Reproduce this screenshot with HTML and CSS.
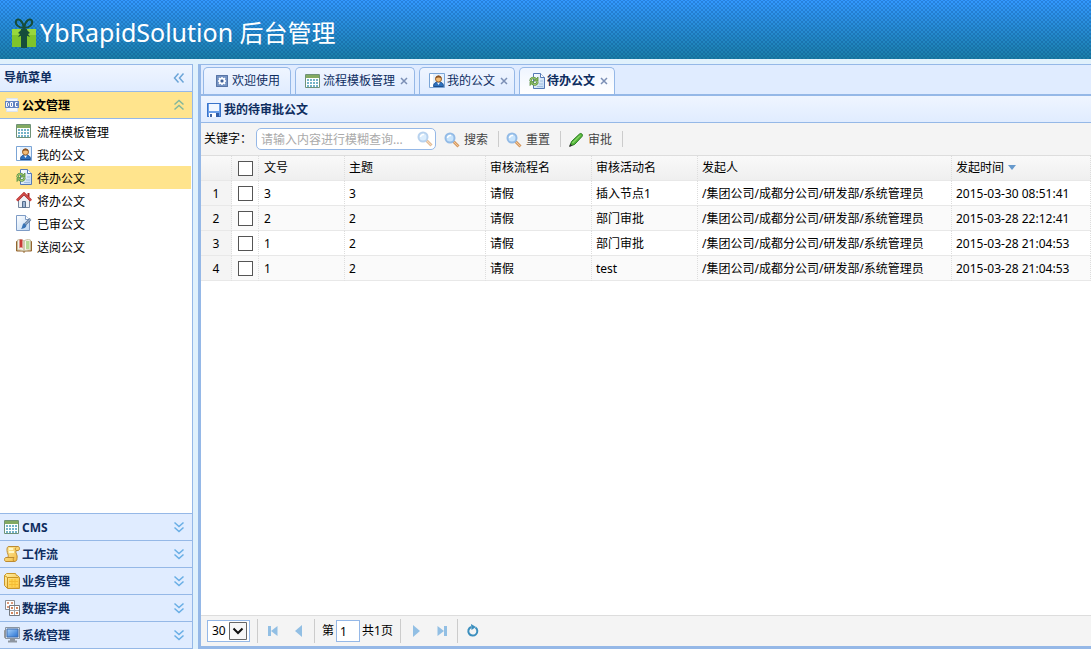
FILE: index.html
```html
<!DOCTYPE html>
<html lang="zh-CN">
<head>
<meta charset="utf-8">
<title>YbRapidSolution 后台管理</title>
<link rel="stylesheet" href="styles.css">
</head>
<body>
<svg class="sprite" aria-hidden="true">
  <defs>
    <linearGradient id="gold" x1="0" y1="0" x2="1" y2="1"><stop offset="0" stop-color="#fff1a6"/><stop offset="1" stop-color="#f2b63c"/></linearGradient>
    <linearGradient id="screen" x1="0" y1="0" x2="1" y2="1"><stop offset="0" stop-color="#a9d3fb"/><stop offset="1" stop-color="#246fd1"/></linearGradient>
    <linearGradient id="paper" x1="0" y1="0" x2="1" y2="1"><stop offset="0" stop-color="#ffffff"/><stop offset="1" stop-color="#bdd7f3"/></linearGradient>
  </defs>
  <symbol id="i-table" viewBox="0 0 16 16">
    <path d="M.5 1.500h14v13H.5z" fill="#fff" stroke="#6f9278"/><path d="M1 2h13v3H1z" fill="#83aa62"/>
    <path d="M2 7h11M2 10h11M2 13h11" stroke="#74b3c9" stroke-width="2" stroke-dasharray="2 1"/>
  </symbol>
  <symbol id="i-user" viewBox="0 0 16 16">
    <path d="M.5.5h15v14H.5z" fill="#e4f0fd" stroke="#7ba5d6"/><path d="M1 1h3v13H1z" fill="#fff"/>
    <path d="M4.500 13.500c0-3.500 2-4.500 5-4.500s5 1 5 4.500z" fill="#2d70bd" stroke="#1d4e8e"/><path d="M8 9.500l1.500 2.500L11 9.500z" fill="#fff"/>
    <circle cx="9.500" cy="6" r="3" fill="#f4bd76" stroke="#9d642c"/><path d="M6.500 5.500c0-4 6-4 6 0-2-1.500-4-1.500-6 0z" fill="#8c5425"/>
  </symbol>
  <symbol id="i-pending" viewBox="0 0 16 16">
    <path d="M4.500.5h7l4 4v11h-11z" fill="url(#paper)" stroke="#5579b6"/><path d="M11.500.5v4h4" fill="#fff" stroke="#5579b6"/>
    <path d="M11 8h3M10 11h4M8 13.500h6" stroke="#a1bee1"/>
    <path d="M1.500 8C1.500 5 4.500 4 6.500 6M8.500 8.500c0 3-3 4-5 2" fill="none" stroke="#5b9148" stroke-width="2.500"/>
    <path d="M1.500 8C1.500 5 4.500 4 6.500 6M8.500 8.500c0 3-3 4-5 2" fill="none" stroke="#b5dc7b"/>
    <path d="M9 4v4H5zM1 12.500v-4h4z" fill="#86b954" stroke="#5b9148" stroke-width=".8"/>
  </symbol>
  <symbol id="i-house" viewBox="0 0 16 16">
    <path d="M2.500 8v7.500h11V8L8 3z" fill="#edf0f5" stroke="#76869d"/><path d="M6.500 9.500h3v6h-3z" fill="#9db4d2" stroke="#546d8c"/>
    <path d="M12.500 1v4" stroke="#a82828" stroke-width="2"/><path d="M1 8.500L8 1.500l7 7" fill="none" stroke="#b92c2c" stroke-width="2.500"/><path d="M1 8.500L8 1.500l7 7" fill="none" stroke="#e56a62"/>
  </symbol>
  <symbol id="i-edit" viewBox="0 0 16 16">
    <path d="M.5.5h9l4 4v11H.5z" fill="url(#paper)" stroke="#7e9cc6"/><path d="M9.500.5v4h4" fill="#fff" stroke="#7e9cc6"/>
    <path d="M14.500 4L9 9.500" stroke="#5c7799" stroke-width="2.500"/><path d="M14.500 4L9 9.500" stroke="#b8cae0"/>
    <path d="M8 8l2.500 2.500C10 13 8 13.500 5 14c1.500-1.500 1-4.500 3-6z" fill="#3974b5"/>
  </symbol>
  <symbol id="i-book" viewBox="0 0 16 16">
    <path d="M.5 3.500v9.500H7l1 1.500L9 13h6.500V3.500z" fill="#c98d4d" stroke="#93652f"/>
    <path d="M1.500 2c3-1 5 0 6.500 1v10c-2-1-4-1-6.500-1zM14.500 2c-3-1-5 0-6.500 1v10c2-1 4-1 6.500-1z" fill="#f8f6ec" stroke="#c4bd9e"/>
    <path d="M3.500 1.500h3v9L5 9l-1.500 1.500z" fill="#c83a35"/><path d="M10 3h3.500v8H10z" fill="#b6d996"/>
  </symbol>
  <symbol id="i-scroll" viewBox="0 0 16 16">
    <path d="M5 .5h9c2 0 2 4 0 4h-2c-1 3 2 4 1 8 0 2-1 3-3 3H2c-2 0-2-4 0-4h2c1-3-1-4-1-7 0-2 0-4 2-4z" fill="url(#gold)" stroke="#bd8b32"/>
    <path d="M12 4.500c-1-1-1-2 0-3M4 11.500h6c-1 1-1 3 0 4" fill="none" stroke="#bd8b32"/><path d="M5 3h4M5 6h5" stroke="#fff8c9" stroke-width="2"/>
  </symbol>
  <symbol id="i-box" viewBox="0 0 16 16">
    <path d="M.5 2.500l2-2h9l1 2h1l2 2v11h-12l-3-3z" fill="url(#gold)" stroke="#c9962a"/><path d="M.5 2.500l3 2h11M3.500 4.500v10.500" fill="none" stroke="#c99522"/>
    <path d="M5 6h9v8H5z" fill="#ffd34e"/><path d="M5 8.500h9M5 11.500h9M8 6v8M11 6v8" stroke="#f4bb35"/>
  </symbol>
  <symbol id="i-dict" viewBox="0 0 16 16">
    <path d="M1.500.5h9v9h-9z" fill="#fff" stroke="#8a8f96"/><path d="M3 2h2v2H3zM7 2h2v2H7zM3 6h2v2H3z" fill="#db987b"/>
    <path d="M5.500 5.500h10v10h-10z" fill="#fff" stroke="#747980"/><path d="M6 10.500h9M10.500 6v9" stroke="#a0a4a9"/><path d="M7 7h2v2H7zM12 7h2v2h-2zM7 12h2v2H7zM12 12h2v2h-2z" fill="#d3865e"/>
  </symbol>
  <symbol id="i-monitor" viewBox="0 0 16 16">
    <path d="M.5 3.500l1-1v9l-1-1z" fill="#bbb" stroke="#999"/><path d="M1.500.5h14v11h-14z" fill="#dce0e5" stroke="#8994a1"/><path d="M3 2h11v8H3z" fill="url(#screen)" stroke="#416fb1"/>
    <path d="M6 12h5v1.500h2v2H4v-2h2z" fill="#8d959f"/>
  </symbol>
  <symbol id="i-gear" viewBox="0 0 16 16">
    <path d="M2 2h12v12H2z" fill="#7593c3"/><path d="M2.500 2.500h11v11h-11z" fill="none" stroke="#5875a6"/><circle cx="8" cy="8" r="2.500" fill="#657fae" stroke="#fff" stroke-width="1.500"/>
    <path d="M8 4v2M8 10v2M4 8h2M10 8h2M5 5l1 1M10 10l1 1M11 5l-1 1M6 10l-1 1" stroke="#fff" stroke-width="1.500"/><circle cx="8" cy="8" r="1" fill="#35548c"/>
  </symbol>
  <symbol id="i-disk" viewBox="0 0 16 16">
    <path d="M1 1h14v14H1z" fill="#6b9fe9"/><path d="M1.500 1.500h13v13h-13z" fill="none" stroke="#3973c9"/><path d="M3 2h10v7H3z" fill="#f1f7ff"/><path d="M3 11h10v4H3z" fill="#315da8"/><path d="M3 11h7v4H3z" fill="#fff"/><path d="M4 12h2v3H4z" fill="#4166a3"/>
  </symbol>
  <symbol id="i-search" viewBox="0 0 16 16">
    <path d="M9.500 9.500l5 5" stroke="#d69a61" stroke-width="3"/><path d="M10 10l4 4" stroke="#f4c797"/><circle cx="6" cy="6" r="4.500" fill="#c8e4fc" stroke="#93bbe6" stroke-width="2"/><path d="M3.500 6A3 3 0 0 1 7 3.500" fill="none" stroke="#fff" stroke-width="1.500"/>
  </symbol>
  <symbol id="i-pencil" viewBox="0 0 16 16">
    <path d="M2 14l1.500-4.500L11.500 2c1.500-1.500 4 .5 2.500 2.500L6.500 12.500z" fill="#57b93c" stroke="#26771f"/><path d="M4.500 11L12 3.500" stroke="#a7e783"/><path d="M1 15l1.200-3.400 2.200 2.200z" fill="#333"/>
  </symbol>
  <symbol id="i-doc" viewBox="0 0 16 16">
    <path d="M2.500 1.500h11v13h-11z" fill="#f3f7fc" stroke="#dbe4ef"/><path d="M1 4h14v7H1z" fill="#6484c2"/>
    <path d="M2.500 5.500h1l1 1v2l-1 1h-1zM6.500 5.500h2v4h-2zM13.500 5.500h-2v4h2" fill="none" stroke="#fff"/>
  </symbol>
  <symbol id="i-gift" viewBox="0 0 24 30">
    <path d="M0 11h24v7H0z" fill="#98d73c"/><path d="M0 17h24v12H0z" fill="#7fc42b"/>
    <path d="M9 11h6v19H9z" fill="#164d3b"/><path d="M12 10C6 10 3 6 4 3c2-4 7 0 8 7 1-7 6-11 8-7 1 3-2 7-8 7z" fill="none" stroke="#164d3b" stroke-width="2"/><path d="M12 9l-6 6 2 1-2 3 5-2 1-3 1 3 5 2-2-3 2-1z" fill="#164d3b"/>
  </symbol>
  <symbol id="i-chev" viewBox="0 0 12 12"><path d="M1.500 1.500L6 5.500l4.500-4M1.500 6.500l4.500 4 4.500-4" fill="none" stroke="currentColor" stroke-width="1.500"/></symbol>
  <symbol id="i-x" viewBox="0 0 8 8"><path d="M1 1l6 6M7 1L1 7" stroke="#7b8fb5" stroke-width="1.500"/></symbol>
</svg>

<header class="banner">
  <svg class="gift"><use href="#i-gift"/></svg>
  <h1>YbRapidSolution <span>后台管理</span></h1>
</header>

<div class="workspace">
  <nav class="sidebar" aria-label="导航菜单">
    <div class="sidebar-title"><span>导航菜单</span><button class="tool left" aria-label="折叠"><svg><use href="#i-chev"/></svg></button></div>
    <button class="group active" aria-expanded="true"><svg class="icon"><use href="#i-doc"/></svg><span>公文管理</span><svg class="chev up"><use href="#i-chev"/></svg></button>
    <ul class="menu">
      <li><a href="#"><svg class="icon"><use href="#i-table"/></svg>流程模板管理</a></li>
      <li><a href="#"><svg class="icon"><use href="#i-user"/></svg>我的公文</a></li>
      <li><a href="#" class="selected"><svg class="icon"><use href="#i-pending"/></svg>待办公文</a></li>
      <li><a href="#"><svg class="icon"><use href="#i-house"/></svg>将办公文</a></li>
      <li><a href="#"><svg class="icon"><use href="#i-edit"/></svg>已审公文</a></li>
      <li><a href="#"><svg class="icon"><use href="#i-book"/></svg>送阅公文</a></li>
    </ul>
    <button class="group"><svg class="icon"><use href="#i-table"/></svg><span>CMS</span><svg class="chev"><use href="#i-chev"/></svg></button>
    <button class="group"><svg class="icon"><use href="#i-scroll"/></svg><span>工作流</span><svg class="chev"><use href="#i-chev"/></svg></button>
    <button class="group"><svg class="icon"><use href="#i-box"/></svg><span>业务管理</span><svg class="chev"><use href="#i-chev"/></svg></button>
    <button class="group"><svg class="icon"><use href="#i-dict"/></svg><span>数据字典</span><svg class="chev"><use href="#i-chev"/></svg></button>
    <button class="group"><svg class="icon"><use href="#i-monitor"/></svg><span>系统管理</span><svg class="chev"><use href="#i-chev"/></svg></button>
  </nav>

  <main class="content">
    <div class="tabs">
      <div class="tab"><button class="tab-name"><svg class="icon"><use href="#i-gear"/></svg>欢迎使用</button></div>
      <div class="tab closable"><button class="tab-name"><svg class="icon"><use href="#i-table"/></svg>流程模板管理</button><button class="close" aria-label="关闭流程模板管理"><svg><use href="#i-x"/></svg></button></div>
      <div class="tab closable"><button class="tab-name"><svg class="icon"><use href="#i-user"/></svg>我的公文</button><button class="close" aria-label="关闭我的公文"><svg><use href="#i-x"/></svg></button></div>
      <div class="tab closable current"><button class="tab-name"><svg class="icon"><use href="#i-pending"/></svg>待办公文</button><button class="close" aria-label="关闭待办公文"><svg><use href="#i-x"/></svg></button></div>
    </div>
    <h2 class="panel-title"><svg class="icon"><use href="#i-disk"/></svg>我的待审批公文</h2>
    <div class="toolbar">
      <label for="keyword">关键字：</label>
      <div class="searchbox"><input id="keyword" type="text" placeholder="请输入内容进行模糊查询..."><button aria-label="查询"><svg class="icon"><use href="#i-search"/></svg></button></div>
      <button class="action"><svg class="icon"><use href="#i-search"/></svg>搜索</button>
      <button class="action"><svg class="icon"><use href="#i-search"/></svg>重置</button>
      <button class="action"><svg class="icon"><use href="#i-pencil"/></svg>审批</button>
    </div>
    <div class="grid">
      <table>
        <colgroup><col class="c-num"><col class="c-check"><col class="c-no"><col class="c-topic"><col class="c-flow"><col class="c-flow"><col class="c-from"><col></colgroup>
        <thead><tr><th></th><th><input type="checkbox" aria-label="全选"></th><th>文号</th><th>主题</th><th>审核流程名</th><th>审核活动名</th><th>发起人</th><th>发起时间<span class="sort"></span></th></tr></thead>
        <tbody>
          <tr><td>1</td><td><input type="checkbox" aria-label="选择第1行"></td><td>3</td><td>3</td><td>请假</td><td>插入节点1</td><td>/集团公司/成都分公司/研发部/系统管理员</td><td>2015-03-30 08:51:41</td></tr>
          <tr><td>2</td><td><input type="checkbox" aria-label="选择第2行"></td><td>2</td><td>2</td><td>请假</td><td>部门审批</td><td>/集团公司/成都分公司/研发部/系统管理员</td><td>2015-03-28 22:12:41</td></tr>
          <tr><td>3</td><td><input type="checkbox" aria-label="选择第3行"></td><td>1</td><td>2</td><td>请假</td><td>部门审批</td><td>/集团公司/成都分公司/研发部/系统管理员</td><td>2015-03-28 21:04:53</td></tr>
          <tr><td>4</td><td><input type="checkbox" aria-label="选择第4行"></td><td>1</td><td>2</td><td>请假</td><td>test</td><td>/集团公司/成都分公司/研发部/系统管理员</td><td>2015-03-28 21:04:53</td></tr>
        </tbody>
      </table>
    </div>
    <footer class="pager">
      <div class="size"><select aria-label="每页条数"><option>30</option></select><svg viewBox="0 0 18 18"><path d="M.5.5h17v17H.5z" fill="#f7f7f7" stroke="#666"/><path d="M4.500 6.500L9 11l4.500-4.500" fill="none" stroke="#111" stroke-width="2"/></svg></div>
      <span class="sep"></span>
      <button aria-label="首页"><svg viewBox="0 0 16 16"><path d="M4.500 3v10" stroke="#92bfe4" stroke-width="3"/><path d="M12.500 3v10L6 8z" fill="#92bfe4"/></svg></button>
      <button aria-label="上一页"><svg viewBox="0 0 16 16"><path d="M11 2v12L4 8z" fill="#92bfe4"/></svg></button>
      <span class="sep"></span>
      <label class="page" for="page">第</label><input id="page" type="text" value="1"><span>共1页</span>
      <span class="sep"></span>
      <button aria-label="下一页"><svg viewBox="0 0 16 16"><path d="M5 2v12l7-6z" fill="#92bfe4"/></svg></button>
      <button aria-label="末页"><svg viewBox="0 0 16 16"><path d="M11.500 3v10" stroke="#92bfe4" stroke-width="3"/><path d="M3.500 3v10L10 8z" fill="#92bfe4"/></svg></button>
      <span class="sep"></span>
      <button aria-label="刷新"><svg viewBox="0 0 16 16"><path d="M10.500 4.500A4.500 4.500 0 1 1 6 4" fill="none" stroke="#3c8fbe" stroke-width="2"/><path d="M6 1l5 3-4.500 3z" fill="#3c8fbe"/></svg></button>
    </footer>
  </main>
</div>
</body>
</html>
```

FILE: styles.css
```css
* { box-sizing: border-box; }
body {
  margin: 0;
  height: 100vh;
  display: flex;
  flex-direction: column;
  background: #e0f1fc;
  color: #000;
  font: 12px/16px "Noto Sans", "Noto Sans CJK SC", sans-serif;
  overflow: hidden;
}
button, input, select { font: inherit; color: inherit; margin: 0; }
button { border: 0; padding: 0; background: none; cursor: pointer; }
.sprite { position: absolute; width: 0; height: 0; }
.icon { width: 16px; height: 16px; flex: none; }

.banner {
  flex: none;
  display: flex;
  align-items: center;
  gap: 4px;
  height: 59px;
  padding: 6px 12px 0;
  color: #fff;
  background:
    radial-gradient(circle, rgba(0, 50, 110, .22) 0 1px, transparent 1px) 0 0 / 4px 4px,
    radial-gradient(circle, rgba(0, 50, 110, .22) 0 1px, transparent 1px) 2px 2px / 4px 4px,
    linear-gradient(#3399ff, #1a7fa8);
}
.gift { width: 24px; height: 32px; }
.banner h1 { margin: 0; font-size: 25px; line-height: 32px; font-weight: 400; }
.banner h1 span { font-size: 24px; }

.workspace { flex: 1; min-height: 0; display: flex; gap: 5px; padding-top: 5px; }

.sidebar {
  flex: none;
  width: 193px;
  display: flex;
  flex-direction: column;
  border: 1px solid #95b8e7;
  border-left: 0;
  background: #fff;
  color: #0e2d5f;
}
.sidebar-title {
  height: 26px;
  display: flex;
  justify-content: space-between;
  align-items: center;
  padding: 0 7px 0 4px;
  font-weight: 700;
  background: linear-gradient(#eff5ff, #e0ecff);
}
.tool { display: flex; color: #6ba5d8; }
.tool svg, .chev { width: 12px; height: 12px; }
.left { transform: rotate(90deg); }
.up { transform: rotate(180deg); }
.group {
  flex: none;
  display: flex;
  align-items: center;
  gap: 2px;
  height: 27px;
  padding: 0 7px 0 4px;
  border-top: 1px solid #95b8e7;
  background: #e0ecff;
  font-weight: 700;
  text-align: left;
}
.group span { flex: 1; padding-top: 1px; }
.chev { color: #68aee5; }
.group.active { height: 28px; background: #ffe48d; border-bottom: 1px solid #95b8e7; color: #000; }
.group.active .chev { color: #83b79c; }
.menu { flex: 1; margin: 0; padding: 1px 1px 1px 0; list-style: none; }
.menu a {
  display: flex;
  align-items: center;
  gap: 5px;
  height: 23px;
  padding: 2px 0 0 16px;
  color: #000;
  text-decoration: none;
}
.menu .icon { margin-bottom: 4px; }
.menu .selected { background: #ffe48d; }

.content {
  flex: 1;
  min-width: 0;
  display: flex;
  flex-direction: column;
  border: solid #95b8e7;
  border-width: 1px 0 3px 3px;
  background: #fff;
}
.tabs {
  flex: none;
  display: flex;
  align-items: flex-end;
  gap: 4px;
  height: 31px;
  padding-left: 2px;
  border-bottom: 2px solid #95b8e7;
  background: #e0ecff;
}
.tab {
  display: flex;
  align-items: center;
  height: 27px;
  padding: 0 10px;
  border: 1px solid #95b8e7;
  border-bottom: 0;
  border-radius: 5px 5px 0 0;
  background: linear-gradient(#eff5ff, #e0ecff);
  color: #0e2d5f;
}
.tab-name { display: flex; align-items: center; gap: 2px; height: 26px; }
.closable { padding: 0 6px 0 9px; gap: 5px; }
.current { background: linear-gradient(#eff5ff, #fff); font-weight: 700; }
.close { display: flex; }
.close svg { width: 8px; height: 8px; }
.panel-title {
  flex: none;
  display: flex;
  align-items: center;
  gap: 2px;
  height: 27px;
  margin: 0;
  padding: 1px 5px 0;
  font-size: 12px;
  border-bottom: 1px solid #95b8e7;
  background: linear-gradient(#eff5ff, #e0ecff);
  color: #0e2d5f;
}
.toolbar {
  flex: none;
  display: flex;
  align-items: center;
  height: 32px;
  padding-left: 3px;
  background: #f4f4f4;
  color: #444;
}
.toolbar label { width: 52px; color: #000; white-space: nowrap; }
.searchbox {
  display: flex;
  align-items: center;
  width: 180px;
  height: 22px;
  border: 1px solid #95b8e7;
  border-radius: 5px;
  background: #fff;
}
.searchbox input { flex: 1; min-width: 0; height: 18px; border: 0; padding: 1px 4px 0; outline: 0; background: none; }
.searchbox input::placeholder { color: #aaa; opacity: 1; }
.searchbox button { display: flex; width: 18px; opacity: .65; }
.action {
  display: flex;
  align-items: center;
  gap: 4px;
  height: 16px;
  padding: 1px 10px 0 7px;
  border-right: 1px solid #ccc;
}
.searchbox + .action { padding-left: 8px; }

.grid { flex: 1; min-height: 0; overflow: hidden; }
table { width: 100%; table-layout: fixed; border-collapse: separate; border-spacing: 0; }
.c-num { width: 31px; }
.c-check { width: 27px; }
.c-no { width: 86px; }
.c-topic { width: 141px; }
.c-flow { width: 106px; }
.c-from { width: 254px; }
th, td {
  height: 25px;
  padding: 0 4px;
  text-align: left;
  font-weight: 400;
  white-space: nowrap;
  border-right: 1px dotted #ddd;
  border-bottom: 1px solid #e8e8e8;
}
th { height: 26px; border-top: 1px solid #ddd; background: linear-gradient(#f9f9f9, #efefef); }
td { padding-top: 1px; }
tbody tr:nth-child(even) { background: #fafafa; }
td:first-child { padding: 1px 0 0; text-align: center; background: #f4f4f4; }
th:nth-child(2), td:nth-child(2) { padding: 0 6px; }
th:nth-child(3), td:nth-child(3) { padding-left: 5px; }
input[type="checkbox"] {
  appearance: none;
  display: block;
  width: 15px;
  height: 15px;
  border: 1px solid #555;
  background: #fff;
}
input[type="checkbox"]:checked { background: #68aee5; }
.sort {
  display: inline-block;
  margin: 0 0 2px 4px;
  vertical-align: middle;
  border: solid transparent;
  border-width: 5px 4px 0;
  border-top-color: #6699cc;
}

.pager {
  flex: none;
  display: flex;
  align-items: center;
  height: 31px;
  padding-left: 6px;
  border-top: 1px solid #ddd;
  background: #f4f4f4;
}
.size { position: relative; width: 43px; height: 22px; }
.size select {
  appearance: none;
  width: 100%;
  height: 22px;
  border: 1px solid #95b8e7;
  border-radius: 0;
  padding: 0 4px;
  background: #fff;
}
.size svg { position: absolute; top: 2px; right: 3px; width: 18px; height: 18px; pointer-events: none; }
.sep { width: 1px; height: 24px; margin: 0 7px; background: #ccc; }
.pager button { display: flex; width: 16px; height: 16px; }
.pager button + button { margin-left: 10px; }
.pager button svg { width: 16px; height: 16px; }
#page { width: 24px; height: 22px; margin: 0 2px; padding: 0 3px; border: 1px solid #95b8e7; background: #fff; }
```
